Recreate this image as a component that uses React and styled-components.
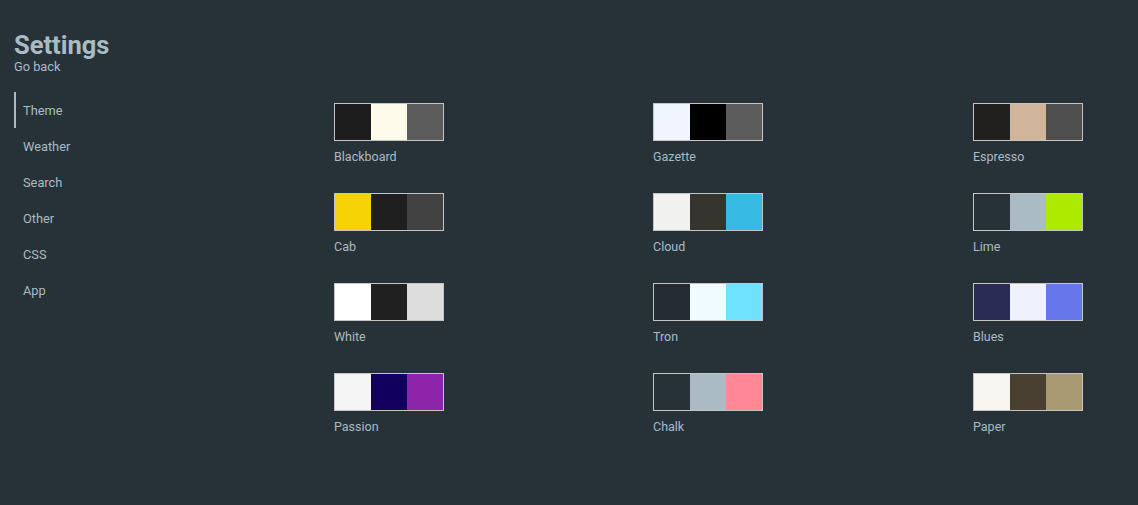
import React from "react";
import styled, { createGlobalStyle } from "styled-components";

const GlobalStyle = createGlobalStyle`
    html, body {
        margin:0;
        padding:0;
        background:#263238;
    }
    body {
        font-family: Roboto, "Noto Sans", sans-serif;
        color:#aabbc3;
    }
`
const Page = styled.div`
    width:1138px;
    height:505px;
    background:#263238;
    display:flex;
    flex-direction:column;
    padding: 30px 0 0 14px;
    box-sizing:border-box;
`
const Title = styled.h1`
    margin:0;
    font-size:25.5px;
    line-height:30px;
    font-weight:700;
    color:#aabbc3;
`
const GoBack = styled.div`
    font-size:12.8px;
    line-height:14px;
    color:#aabbc3;
`
const Body = styled.div`
    display:flex;
    flex-direction:row;
    margin-top:18px;
`
const Sidebar = styled.nav`
    width:320px;
    display:flex;
    flex-direction:column;
`
const NavItem = styled.div`
    height:36px;
    display:flex;
    align-items:center;
    padding-left:7px;
    font-size:12.8px;
    color:#aabbc3;
    border-left:2px solid ${p => p.active ? "#aabbc3" : "transparent"};
`
const Grid = styled.div`
    display:grid;
    grid-template-columns: 319px 320px 110px;
    padding-top:11px;
`
const Theme = styled.div`
    height:90px;
    display:flex;
    flex-direction:column;
`
const Swatch = styled.div`
    display:flex;
    width:108px;
    height:36px;
    border:1px solid #c4c4c4;
`
const Chip = styled.div`
    flex:1;
    background:${p => p.color};
`
const Label = styled.div`
    margin-top:8px;
    font-size:12.5px;
    line-height:15px;
    color:#aabbc3;
`

const themes = [
    ["Blackboard", ["#1d1d1d", "#fffbeb", "#5c5c5c"]],
    ["Gazette", ["#f0f5ff", "#000000", "#5c5c5c"]],
    ["Espresso", ["#21201e", "#d1b59a", "#4e4e4e"]],
    ["Cab", ["#f6d305", "#1f1f1f", "#424242"]],
    ["Cloud", ["#f1f2f0", "#35342f", "#37bbe4"]],
    ["Lime", ["#263238", "#aabbc3", "#aeea00"]],
    ["White", ["#ffffff", "#202020", "#dddddd"]],
    ["Tron", ["#242b33", "#effbff", "#6ee2ff"]],
    ["Blues", ["#2b2c56", "#eff1fc", "#6677eb"]],
    ["Passion", ["#f5f5f5", "#12005e", "#8e24aa"]],
    ["Chalk", ["#263238", "#aabbc3", "#ff8796"]],
    ["Paper", ["#f8f6f1", "#4a4031", "#aa9a73"]],
]

const nav = ["Theme", "Weather", "Search", "Other", "CSS", "App"]

const App = () => {
    return(
        <Page>
            <GlobalStyle/>
            <Title>Settings</Title>
            <GoBack>Go back</GoBack>
            <Body>
                <Sidebar>
                    {nav.map((item, i) => (
                        <NavItem key={item} active={i === 0}>{item}</NavItem>
                    ))}
                </Sidebar>
                <Grid>
                    {themes.map(([name, colors]) => (
                        <Theme key={name}>
                            <Swatch>
                                {colors.map((c, i) => <Chip key={i} color={c}/>)}
                            </Swatch>
                            <Label>{name}</Label>
                        </Theme>
                    ))}
                </Grid>
            </Body>
        </Page>
    )
}

export default App;
